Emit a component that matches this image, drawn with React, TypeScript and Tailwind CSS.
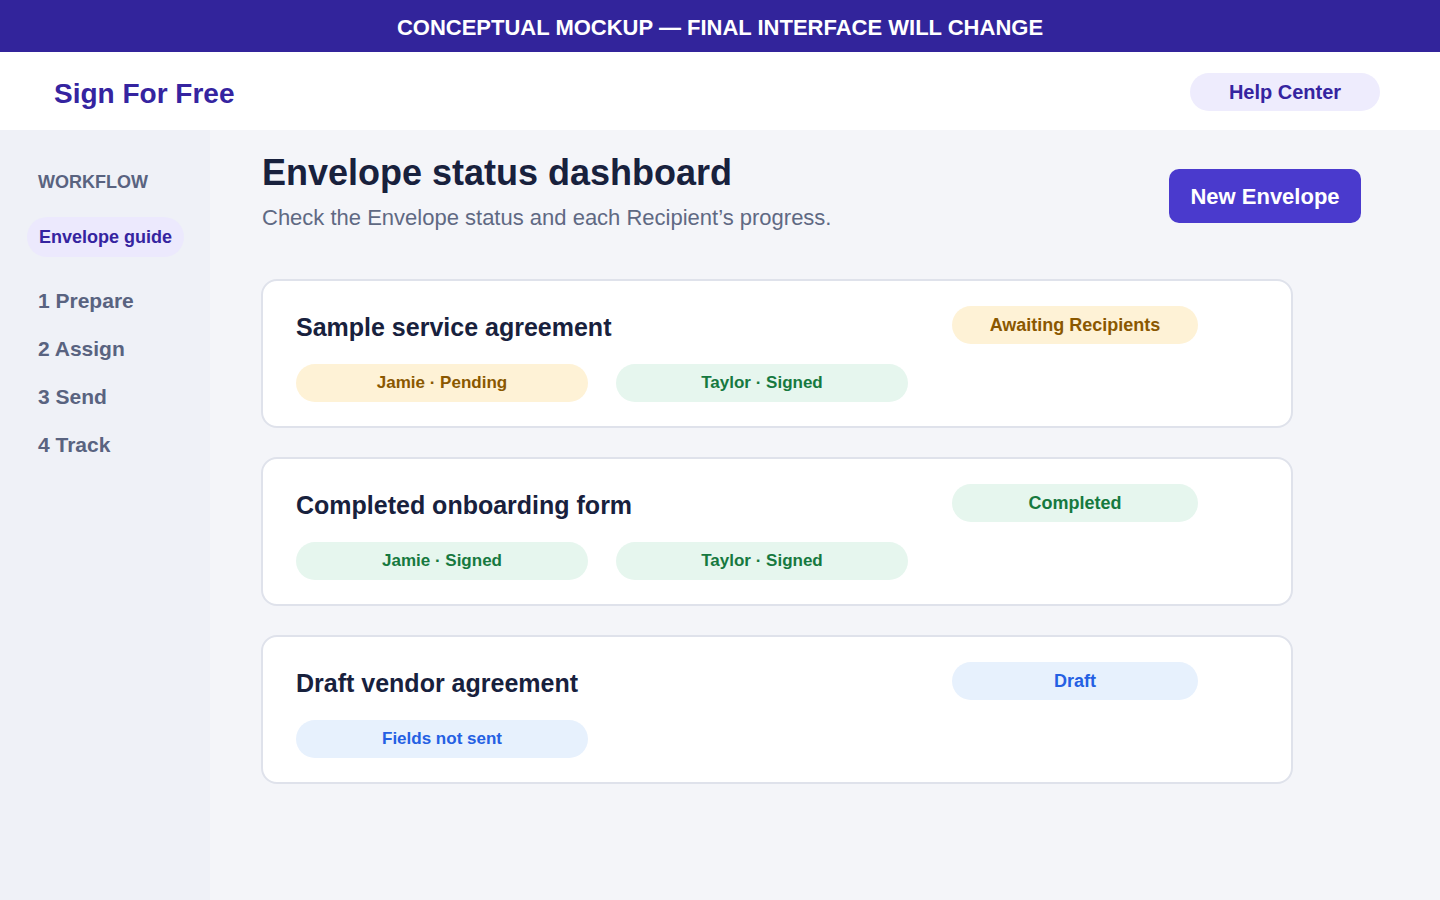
import React from "react";

type Tone = "amber" | "green" | "blue";

const toneClass: Record<Tone, string> = {
  amber: "bg-[#fef2d6] text-[#8a5800]",
  green: "bg-[#e6f6ee] text-[#16793f]",
  blue: "bg-[#e7f1fd] text-[#2460e3]",
};

type Envelope = {
  title: string;
  status: { label: string; tone: Tone };
  recipients: { label: string; tone: Tone }[];
};

const envelopes: Envelope[] = [
  {
    title: "Sample service agreement",
    status: { label: "Awaiting Recipients", tone: "amber" },
    recipients: [
      { label: "Jamie · Pending", tone: "amber" },
      { label: "Taylor · Signed", tone: "green" },
    ],
  },
  {
    title: "Completed onboarding form",
    status: { label: "Completed", tone: "green" },
    recipients: [
      { label: "Jamie · Signed", tone: "green" },
      { label: "Taylor · Signed", tone: "green" },
    ],
  },
  {
    title: "Draft vendor agreement",
    status: { label: "Draft", tone: "blue" },
    recipients: [{ label: "Fields not sent", tone: "blue" }],
  },
];

const steps = ["1 Prepare", "2 Assign", "3 Send", "4 Track"];

function Pill({ label, tone, className }: { label: string; tone: Tone; className: string }) {
  return (
    <div
      className={`flex h-[38px] items-center justify-center rounded-full font-bold ${toneClass[tone]} ${className}`}
    >
      {label}
    </div>
  );
}

function EnvelopeCard({ envelope }: { envelope: Envelope }) {
  return (
    <div className="flex h-[149px] w-[1032px] items-start rounded-[16px] border-2 border-[#dfe2eb] bg-white pt-[25px] pl-[33px]">
      <div className="w-[612px]">
        <h2 className="mt-[5px] text-[25px] leading-[32px] font-bold text-[#18213d]">{envelope.title}</h2>
        <div className="mt-[21px] flex gap-[28px]">
          {envelope.recipients.map((r) => (
            <Pill key={r.label} label={r.label} tone={r.tone} className="w-[292px] text-[17px]" />
          ))}
        </div>
      </div>
      <div className="ml-[44px]">
        <Pill label={envelope.status.label} tone={envelope.status.tone} className="w-[246px] text-[18px]" />
      </div>
    </div>
  );
}

export default function App() {
  return (
    <div className="flex min-h-[900px] flex-col bg-[#f4f5f9] font-['Liberation_Sans',Arial,sans-serif]">
      <div className="flex h-[52px] items-center justify-center bg-[#32249b] pt-[2px] text-[22px] font-bold text-white">
        CONCEPTUAL MOCKUP — FINAL INTERFACE WILL CHANGE
      </div>
      <header className="flex h-[78px] items-center justify-between bg-white pt-[2px] pr-[60px] pl-[54px]">
        <div className="mt-[3px] text-[28px] font-bold text-[#3524a0]">Sign For Free</div>
        <div className="flex h-[38px] w-[190px] items-center justify-center rounded-full bg-[#eeecfd] text-[20px] font-bold text-[#3524a0]">
          Help Center
        </div>
      </header>
      <div className="flex flex-1">
        <aside className="w-[210px] shrink-0 bg-[#eff1f7] pt-[42px]">
          <div className="pl-[38px] text-[18px] leading-[20px] font-bold text-[#596380]">WORKFLOW</div>
          <div className="mt-[25px] ml-[27px] flex h-[40px] w-[157px] items-center justify-center rounded-full bg-[#ece9fd] text-[18px] font-bold text-[#3524a0]">
            Envelope guide
          </div>
          <nav className="mt-[30px] flex flex-col">
            {steps.map((s) => (
              <div key={s} className="h-[48px] pl-[38px] text-[21px] leading-[28px] font-bold text-[#596380]">
                {s}
              </div>
            ))}
          </nav>
        </aside>
        <main className="flex-1 pt-[22px] pl-[52px]">
          <div className="flex w-[1099px] items-start justify-between">
            <div>
              <h1 className="text-[36px] leading-[42px] font-bold text-[#18213d]">Envelope status dashboard</h1>
              <p className="mt-[11px] text-[22px] leading-[26px] text-[#5f6983]">
                Check the Envelope status and each Recipient’s progress.
              </p>
            </div>
            <button className="mt-[17px] flex h-[54px] w-[192px] items-center justify-center rounded-[10px] bg-[#4a3acd] text-[22px] font-bold text-white">
              New Envelope
            </button>
          </div>
          <div className="mt-[48px] -ml-px flex flex-col gap-[29px]">
            {envelopes.map((e) => (
              <EnvelopeCard key={e.title} envelope={e} />
            ))}
          </div>
        </main>
      </div>
    </div>
  );
}
